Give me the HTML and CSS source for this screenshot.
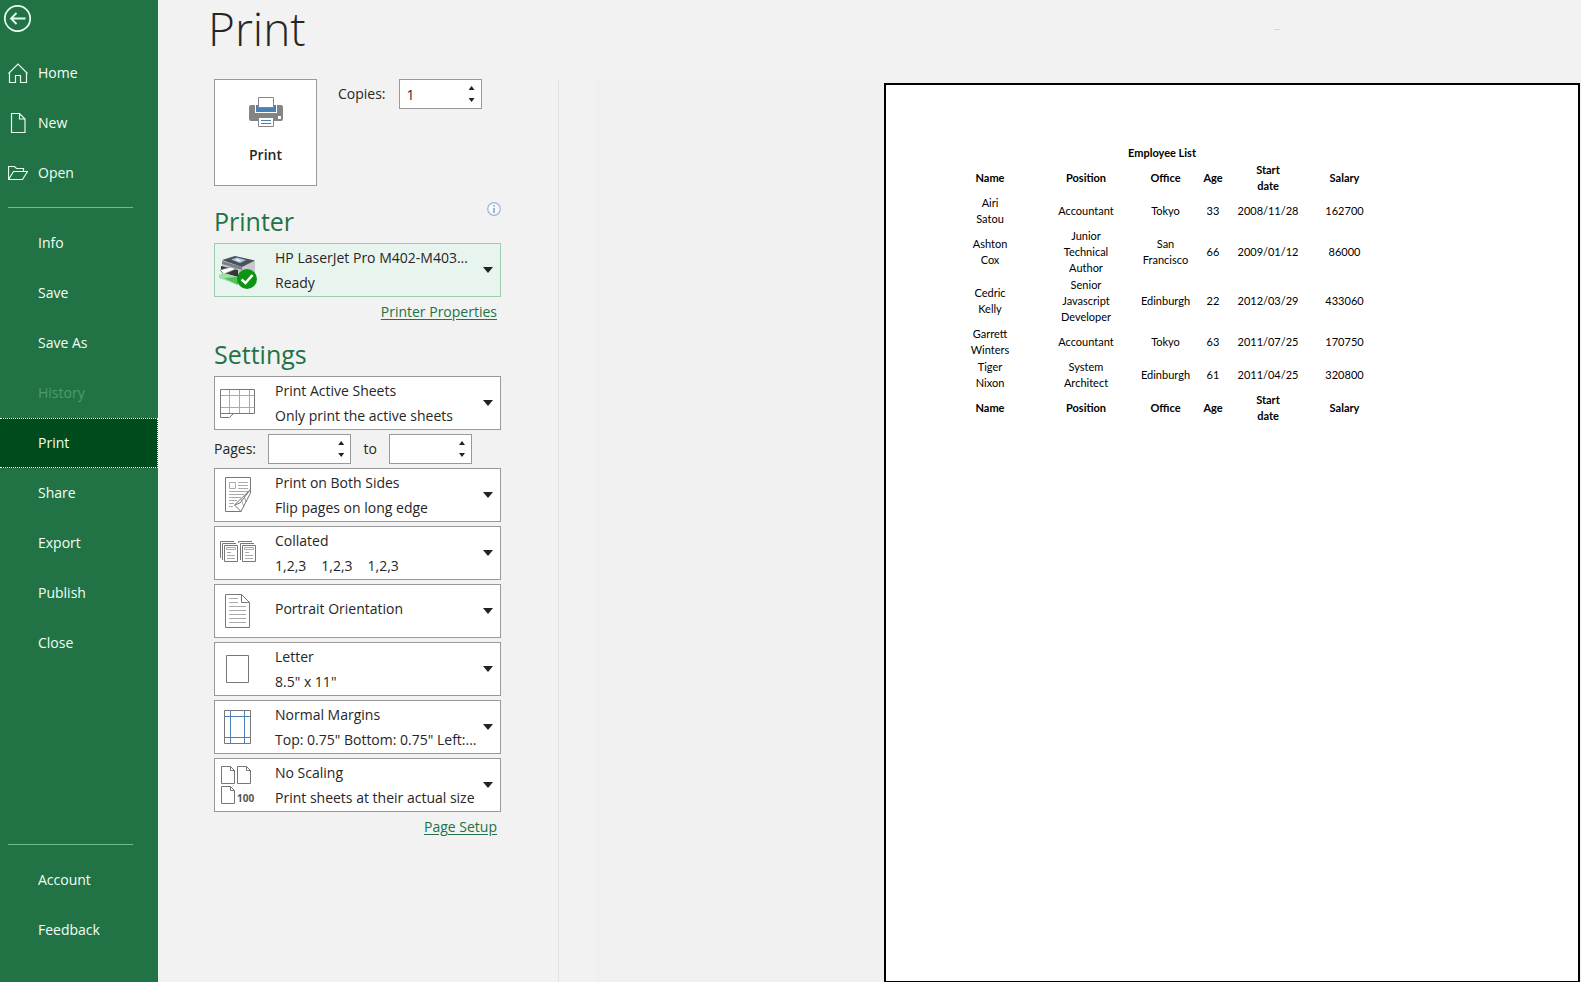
FILE: index.html
```html
<!DOCTYPE html>
<html lang="en">
<head>
<meta charset="utf-8">
<title>Print</title>
<link rel="stylesheet" href="styles.css">
</head>
<body>
<div class="app">
  <nav class="sidebar">
    <button class="back" type="button" aria-label="Back">
      <svg width="28" height="28" viewBox="0 0 28 28"><circle cx="13.500" cy="14.500" r="12.700"/><path d="M21.500 14.500H7M12.500 9L7 14.500L12.500 20"/></svg>
    </button>
    <a class="item" href="#"><svg class="nav-icon" width="20" height="20" viewBox="0 0 20 20"><path d="M.5 10.500L10 1L19.500 10.500M1.500 9.500V19.500H7.500V12.500H12.500V19.500H18.500V9.500"/></svg>Home</a>
    <a class="item" href="#"><svg class="nav-icon" width="20" height="20" viewBox="0 0 20 20"><path d="M3.500.5H11.500L17 6V19.500H3.500ZM11.500.5V6H17"/></svg>New</a>
    <a class="item" href="#"><svg class="nav-icon" width="20" height="20" viewBox="0 0 20 20"><path d="M.5 16.500V3.500H6.500L8.500 5.500H15.500V8.500M.5 16.500L5.500 8.500H19.500L14.500 16.500Z"/></svg>Open</a>
    <hr class="rule">
    <a class="item" href="#">Info</a>
    <a class="item" href="#">Save</a>
    <a class="item" href="#">Save As</a>
    <a class="item disabled" aria-disabled="true">History</a>
    <a class="item current" href="#" aria-current="page">Print</a>
    <a class="item" href="#">Share</a>
    <a class="item" href="#">Export</a>
    <a class="item" href="#">Publish</a>
    <a class="item" href="#">Close</a>
    <hr class="rule bottom">
    <a class="item" href="#">Account</a>
    <a class="item" href="#">Feedback</a>
  </nav>

  <main class="main">
    <header class="top"><h1>Print</h1><span class="mark"></span></header>
    <div class="columns">
      <section class="panel">
        <div class="print-row">
          <button class="print-btn" type="button">
            <svg width="34" height="30" viewBox="0 0 34 30"><rect y="8" width="34" height="16" rx="2" fill="#848484"/><path d="M6 8H28V16H6Z" fill="#fff"/><path d="M7 8H27V15H7Z" fill="#4a80b4"/><path d="M9.500.5H24.500V10.500H9.500Z" fill="#fff" stroke="#848484"/><path d="M9.500 20.500H24.500V29.500H9.500Z" fill="#fff" stroke="#848484"/><path d="M12 23.500H22M12 26.500H22" stroke="#4a80b4"/><rect x="29" y="19" width="3" height="3" fill="#fff"/></svg>
            <span>Print</span>
          </button>
          <div class="copies">
            <label for="copies">Copies:</label>
            <div class="spin"><input id="copies" type="text" inputmode="numeric" value="1"><div class="steps"><button type="button" aria-label="More copies"></button><button class="down" type="button" aria-label="Fewer copies"></button></div></div>
          </div>
        </div>

        <div class="heading">
          <h2>Printer</h2>
          <svg class="info" width="14" height="14" viewBox="0 0 14 14"><circle cx="7" cy="7" r="6.300" fill="#f7f9fd" stroke="#9db4dd" stroke-width="1.200"/><path d="M7 6V11M7 3V4.600" stroke="#8e9fbd" stroke-width="1.600"/></svg>
        </div>
        <button class="drop printer" type="button" aria-haspopup="listbox">
          <svg width="40" height="40" viewBox="0 0 40 40">
            <path d="M3 11L16 6L36 11V23L22 30L3 23Z" fill="#c6c8cb"/>
            <path d="M3 10L16 6L36 10.500L23 17Z" fill="#4c5158"/>
            <path d="M12 9.500L18 7.500L27 10L21 13Z" fill="#a9c6e6"/><path d="M16 10L18.500 9L22 10.500L19.500 11.500Z" fill="#e9f3fc"/>
            <path d="M3 11L23 17V20L3 14Z" fill="#7b8087"/>
            <path d="M2 16L19 20V27L2 22Z" fill="#33363a"/>
            <path d="M1 20L12 17L17 19L5 24Z" fill="#fff" stroke="#777b80" stroke-width=".7"/>
            <path d="M0 25L4 23L19 27V35L0 28Z" fill="#9fe0a3"/><path d="M5 28L19 27V35Z" fill="#4dc45a"/>
            <circle cx="28" cy="29" r="10" fill="#0d9413"/><path d="M22.500 29.500L26.500 33L33.500 25" fill="none" stroke="#fff" stroke-width="2.600"/>
          </svg>
          <span class="text"><span>HP LaserJet Pro M402-M403...</span><span>Ready</span></span><i class="caret"></i>
        </button>
        <div class="link-row"><a href="#">Printer Properties</a></div>

        <div class="heading settings"><h2>Settings</h2></div>
        <div class="options">
          <button class="drop" type="button" aria-haspopup="listbox">
            <svg class="line" width="40" height="40" viewBox="0 0 40 40"><path class="soft" d="M10.500 6V30M20.500 6V30M30.500 6V30M1 12.500H35M1 24.500H35"/><path d="M1.500 6.500H35.500V30.500H1.500ZM1.500 30.500V34.500H10.500L14.500 30.500"/></svg>
            <span class="text"><span>Print Active Sheets</span><span>Only print the active sheets</span></span><i class="caret"></i>
          </button>
          <div class="pages">
            <label for="from">Pages:</label>
            <div class="spin"><input id="from" type="text" inputmode="numeric"><div class="steps"><button type="button" aria-label="First page up"></button><button class="down" type="button" aria-label="First page down"></button></div></div>
            <label for="to">to</label>
            <div class="spin"><input id="to" type="text" inputmode="numeric"><div class="steps"><button type="button" aria-label="Last page up"></button><button class="down" type="button" aria-label="Last page down"></button></div></div>
          </div>
          <button class="drop" type="button" aria-haspopup="listbox">
            <svg class="line" width="40" height="40" viewBox="0 0 40 40"><path class="soft" d="M10.500 7.500H16.500V13.500H10.500ZM19 7.500H29M19 10.500H29M19 13.500H29M10 16.500H29M10 19.500H25M10 22.500H22M10 25.500H18M10 28.500H15M10 31.500H14M22 24L25 32M25 21L27 27"/><path d="M22 36.500H6.500V2.500H31.500V14.500L15.500 30L22 36.500L31.500 18V14.500M15.500 30L21 28L31.500 14.500"/></svg>
            <span class="text"><span>Print on Both Sides</span><span>Flip pages on long edge</span></span><i class="caret"></i>
          </button>
          <button class="drop" type="button" aria-haspopup="listbox">
            <svg class="line" width="40" height="40" viewBox="0 0 40 40"><path d="M5.500 12.500H18.500V28.500H5.500ZM3.500 27V10.500H17M1.500 25V8.500H15M23.500 12.500H36.500V28.500H23.500ZM21.500 27V10.500H35M19.500 10V8.500H33"/><path class="soft" d="M7.500 14.500H16.500V16.500H7.500ZM8 19.500H12M8 22.500H16M8 25.500H16M25.500 14.500H34.500V16.500H25.500ZM26 19.500H30M26 22.500H34M26 25.500H34"/></svg>
            <span class="text"><span>Collated</span><span class="sets"><span>1,2,3</span><span>1,2,3</span><span>1,2,3</span></span></span><i class="caret"></i>
          </button>
          <button class="drop" type="button" aria-haspopup="listbox">
            <svg class="line" width="40" height="40" viewBox="0 0 40 40"><path d="M6.500 3.500H22.500L30.500 11.500V36.500H6.500ZM22.500 3.500V11.500H30.500"/><path class="soft" d="M10 7.500H19M10 11.500H19M10 15.500H27M10 19.500H27M10 23.500H27M10 27.500H27M10 31.500H27"/></svg>
            <span class="text single"><span>Portrait Orientation</span></span><i class="caret"></i>
          </button>
          <button class="drop" type="button" aria-haspopup="listbox">
            <svg class="line" width="40" height="40" viewBox="0 0 40 40"><path d="M7.500 6.500H29.500V33.500H7.500Z"/></svg>
            <span class="text"><span>Letter</span><span>8.5" x 11"</span></span><i class="caret"></i>
          </button>
          <button class="drop" type="button" aria-haspopup="listbox">
            <svg class="line" width="40" height="40" viewBox="0 0 40 40"><path d="M5.500 3.500H31.500V36.500H5.500Z"/><path class="blue" d="M11.500 4V36M25.500 4V36M6 9.500H31M6 30.500H31"/></svg>
            <span class="text"><span>Normal Margins</span><span>Top: 0.75" Bottom: 0.75" Left:...</span></span><i class="caret"></i>
          </button>
          <button class="drop" type="button" aria-haspopup="listbox">
            <svg class="line" width="40" height="40" viewBox="0 0 40 40"><path d="M2.500 1.500H11.500L15.500 5.500V18.500H2.500ZM11.500 1.500V5.500H15.500M18.500 1.500H27.500L31.500 5.500V18.500H18.500ZM27.500 1.500V5.500H31.500M2.500 21.500H11.500L15.500 25.500V38.500H2.500ZM11.500 21.500V25.500H15.500"/><text x="18" y="37">100</text></svg>
            <span class="text"><span>No Scaling</span><span>Print sheets at their actual size</span></span><i class="caret"></i>
          </button>
        </div>
        <div class="link-row"><a href="#">Page Setup</a></div>
      </section>

      <section class="preview">
        <div class="sheet">
          <table>
            <caption>Employee List</caption>
            <colgroup><col class="c-name"><col class="c-pos"><col class="c-office"><col class="c-age"><col class="c-date"><col class="c-salary"></colgroup>
            <thead><tr><th>Name</th><th>Position</th><th>Office</th><th>Age</th><th>Start<br>date</th><th>Salary</th></tr></thead>
            <tbody>
              <tr><td>Airi<br>Satou</td><td>Accountant</td><td>Tokyo</td><td>33</td><td>2008/11/28</td><td>162700</td></tr>
              <tr class="tall"><td>Ashton<br>Cox</td><td>Junior<br>Technical<br>Author</td><td>San<br>Francisco</td><td>66</td><td>2009/01/12</td><td>86000</td></tr>
              <tr class="tall"><td>Cedric<br>Kelly</td><td>Senior<br>Javascript<br>Developer</td><td>Edinburgh</td><td>22</td><td>2012/03/29</td><td>433060</td></tr>
              <tr><td>Garrett<br>Winters</td><td>Accountant</td><td>Tokyo</td><td>63</td><td>2011/07/25</td><td>170750</td></tr>
              <tr><td>Tiger<br>Nixon</td><td>System<br>Architect</td><td>Edinburgh</td><td>61</td><td>2011/04/25</td><td>320800</td></tr>
            </tbody>
            <tfoot><tr><th>Name</th><th>Position</th><th>Office</th><th>Age</th><th>Start<br>date</th><th>Salary</th></tr></tfoot>
          </table>
        </div>
      </section>
    </div>
  </main>
</div>
</body>
</html>
```
FILE: styles.css
```css
* { box-sizing: border-box; }
body { margin: 0; background: #f2f2f2; color: #262626; font: 14px/24px "Open Sans", "Noto Sans", sans-serif; }
button, input { font: inherit; color: inherit; }
button { padding: 0; border: 0; background: none; }
.app { display: flex; min-height: 100vh; }

.sidebar { display: flex; flex-direction: column; flex: 0 0 158px; padding: 4px 0 27px; background: #217346; color: #fff; }
.back { align-self: flex-start; width: 28px; height: 28px; margin: 0 0 16px 4px; line-height: 0; }
.sidebar svg { fill: none; stroke: #e8fbef; stroke-width: 1.2; }
.sidebar .back svg { stroke-width: 1.8; }
.item { position: relative; display: flex; align-items: center; height: 50px; padding-left: 38px; border: 1px dotted transparent; border-left: 0; color: #f2fff6; text-decoration: none; }
.nav-icon { position: absolute; left: 8px; }
.item.disabled { color: #4f9a6e; }
.item.current { border-color: #fff; background: #004b1c; }
.rule { flex: none; width: 125px; height: 1px; margin: 9px 0 10px 8px; border: 0; background: #6dba8b; }
.rule.bottom { margin-top: auto; }

.main { display: flex; flex: 1; flex-direction: column; }
.top { display: flex; justify-content: space-between; height: 80px; padding: 0 301px 0 50px; }
h1 { margin: 0; font-size: 46px; font-weight: 300; line-height: 56px; }
.mark { width: 6px; height: 1px; margin-top: 29px; background: #d4d4d4; }
.columns { display: flex; flex: 1; }
.panel { flex: 0 0 401px; padding: 0 57px 0 56px; margin-top: -1px; border-right: 1px solid #e2e2e2; }

.print-row { display: flex; align-items: flex-start; gap: 21px; }
.print-btn { display: flex; flex-direction: column; align-items: center; gap: 16px; width: 103px; height: 107px; padding-top: 17px; border: 1px solid #999; background: #fff; font-weight: 600; }
.copies { display: flex; align-items: center; gap: 13px; }
.spin { display: flex; width: 83px; height: 30px; border: 1px solid #999; background: #fff; }
.spin input { flex: 1; min-width: 0; padding: 2px 0 0 7px; border: 0; background: none; outline: 0; }
.steps { display: flex; flex-direction: column; justify-content: space-between; width: 19px; padding: 6px 0; }
.steps button { width: 6px; height: 4px; margin-left: 7px; background: #222; clip-path: polygon(50% 0, 100% 100%, 0 100%); }
.steps .down { clip-path: polygon(0 0, 100% 0, 50% 100%); }

.heading { display: flex; align-items: flex-start; justify-content: space-between; height: 57px; padding-top: 16px; }
.heading.settings { height: 52px; padding-top: 11px; }
h2 { margin: 0; color: #217346; font-size: 25px; font-weight: 400; line-height: 38px; }
.drop { display: flex; align-items: center; width: 100%; height: 54px; padding: 0 7px 0 4px; border: 1px solid #999; background: #fff; text-align: left; line-height: 25px; }
.drop.printer { border-color: #9bcdb0; background: #e8f5ee; }
.drop svg { flex: none; }
.text { display: flex; flex: 1; flex-direction: column; margin-left: 16px; min-width: 0; white-space: nowrap; }
.text.single { padding-bottom: 5px; }
.sets { display: flex; gap: 15px; }
.caret { flex: none; width: 10px; height: 6px; background: #222; clip-path: polygon(0 0, 100% 0, 50% 100%); }
.line { fill: none; stroke: #777; }
.line .soft { stroke: #aaa; }
.line .blue { stroke: #4a80b4; }
.line text { fill: #555; stroke: none; font-size: 10px; font-weight: 700; }
.link-row { display: flex; justify-content: flex-end; padding: 3px 4px 0 0; }
.link-row a { color: #217346; text-underline-offset: 2px; }
.options { display: flex; flex-direction: column; gap: 4px; }
.pages { display: flex; align-items: center; justify-content: space-between; padding-right: 29px; }

.preview { flex: 1; margin-left: 37px; padding: 3px 1px 0 288px; background: #f0f0f0; display: flex; }
.sheet { flex: 1; padding: 60px 0 0 56px; border: 2px solid #000; border-bottom-width: 1px; background: #fff; }
table { width: 440px; table-layout: fixed; border-collapse: collapse; color: #000; font: 11px/16px Lato, sans-serif; text-align: center; }
caption { height: 16px; font-weight: 700; }
th, td { height: 33px; padding: 0; }
.tall td { height: 49px; }
.c-name, .c-pos { width: 96px; }
.c-office { width: 63px; }
.c-age { width: 32px; }
.c-date { width: 78px; }
.c-salary { width: 75px; }
```
